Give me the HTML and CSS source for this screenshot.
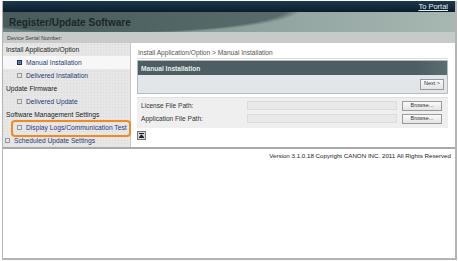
FILE: index.html
```html
<!DOCTYPE html>
<html>
<head>
<meta charset="utf-8">
<link rel="stylesheet" href="styles.css">
</head>
<body>
<div class="frame">
  <div class="topbar"><a class="portal" href="#">To Portal</a></div>
  <div class="header"><h1>Register/Update Software</h1></div>
  <div class="serial">Device Serial Number:</div>
  <div class="content">
    <nav class="sidebar">
      <div class="sec">Install Application/Option</div>
      <div class="item selected"><span class="bullet on"></span>Manual Installation</div>
      <div class="item"><span class="bullet"></span>Delivered Installation</div>
      <div class="sec">Update Firmware</div>
      <div class="item"><span class="bullet"></span>Delivered Update</div>
      <div class="sec">Software Management Settings</div>
      <div class="item hl"><span class="bullet"></span>Display Logs/Communication Test<span class="ring"></span></div>
      <div class="item top"><span class="bullet"></span>Scheduled Update Settings</div>
    </nav>
    <main class="main">
      <div class="crumb">Install Application/Option &gt; Manual Installation</div>
      <section class="panel">
        <div class="panel-head">Manual Installation</div>
        <div class="panel-body"><button class="btn">Next &gt;</button></div>
      </section>
      <section class="form">
        <div class="row"><span class="label">License File Path:</span><span class="field"></span><button class="btn browse">Browse...</button></div>
        <div class="row"><span class="label">Application File Path:</span><span class="field"></span><button class="btn browse">Browse...</button></div>
      </section>
      <div class="totop"><svg width="9" height="9" viewBox="0 0 9 9"><rect x="0.5" y="0.5" width="8" height="8" fill="#d8d8d8" stroke="#777"/><rect x="2" y="2" width="5" height="1" fill="#222"/><path d="M4.5 3.2 L7 6 H2 Z" fill="#222"/><rect x="2" y="6" width="5" height="1" fill="#222"/></svg></div>
    </main>
  </div>
  <footer class="footer">Version 3.1.0.18 Copyright CANON INC. 2011 All Rights Reserved</footer>
</div>
</body>
</html>
```
FILE: styles.css
```css
* { box-sizing: border-box; }
html, body { margin: 0; padding: 0; background: #fff; }
body {
  padding: 1px 1px 1px 2px;
  font-family: "Liberation Sans", Arial, sans-serif;
  width: 458px;
  height: 261px;
}
.frame {
  width: 455px;
  height: 259px;
  border-left: 1px solid #b4b4b4;
  border-right: 2px solid #b4b4b4;
  border-bottom: 2px solid #b4b4b4;
  display: flex;
  flex-direction: column;
  background: #fff;
}
.topbar {
  height: 11px;
  background: linear-gradient(#1c3a4e, #0b1d2b);
  display: flex;
  justify-content: flex-end;
  align-items: center;
  padding-right: 7px;
}
.portal {
  color: #e8eef2;
  font-size: 7.5px;
  text-decoration: underline;
  line-height: 1;
}
.header {
  height: 20px;
  background:
    radial-gradient(ellipse 190px 26px at 110px -4px, rgba(40,60,62,0.55) 0%, rgba(40,60,62,0.55) 92%, rgba(40,60,62,0) 100%),
    linear-gradient(to right, #6d8281, #8fa29e 55%, #a7b7b2);
  display: flex;
  align-items: center;
  padding-left: 6px;
}
.header h1 {
  margin: 0;
  font-size: 10px;
  font-weight: bold;
  color: #1d2528;
}
.serial {
  height: 11px;
  background: #c6cac9;
  font-size: 5.5px;
  color: #3a3a3a;
  display: flex;
  align-items: center;
  padding-left: 4px;
}
.content {
  display: flex;
  height: 106px;
  border-bottom: 2px solid #a9a9a9;
}
.sidebar {
  width: 128px;
  background-color: #e6e6e6;
  background-image: radial-gradient(#dadada 0.6px, transparent 0.7px);
  background-size: 3px 3px;
  border-right: 1px solid #c8c8c8;
  display: flex;
  flex-direction: column;
}
.sec, .item {
  height: 13.2px;
  display: flex;
  align-items: center;
  font-size: 6.7px;
  white-space: nowrap;
  position: relative;
}
.sec { color: #222; padding-left: 3px; }
.item { color: #2b3a74; padding-left: 14px; }
.item.top { padding-left: 2px; }
.item.selected { background: #f7f7f7; }
.bullet {
  width: 5px;
  height: 5px;
  border: 1px solid #999;
  background: #e4e4e4;
  margin-right: 4px;
  flex: none;
}
.bullet.on {
  border: 1px solid #1c2f5c;
  background: #2e4c8c;
  box-shadow: inset 0 0 0 0.5px #8fa4d0;
}
.ring {
  position: absolute;
  left: 8px;
  top: -1px;
  width: 120px;
  height: 17px;
  border: 2px solid #f08a24;
  border-radius: 4px;
}
.main {
  flex: 1;
  padding: 6px 7px 0 6px;
  display: flex;
  flex-direction: column;
}
.crumb {
  font-size: 6.6px;
  color: #555;
  padding: 0 0 3px 1px;
  border-bottom: 1px solid #dedede;
  height: 10px;
}
.panel {
  margin-top: 1px;
  border: 1px solid #b8bcbe;
}
.panel-head {
  height: 14px;
  background: linear-gradient(to right, #4c5e62 90%, #5b6d70);
  color: #e9eded;
  font-size: 6.6px;
  font-weight: bold;
  display: flex;
  align-items: center;
  padding-left: 3px;
}
.panel-body {
  height: 18px;
  background: #e3e6e8;
  display: flex;
  justify-content: flex-end;
  align-items: center;
  padding-right: 3px;
}
.btn {
  font-family: "Liberation Sans", Arial, sans-serif;
  font-size: 5.5px;
  color: #333;
  background: linear-gradient(#fafafa, #e4e4e4);
  border: 1px solid #9a9a9a;
  height: 11px;
  padding: 0 3px;
  line-height: 1;
}
.form {
  margin-top: 3px;
  background: #efefef;
  border-top: 1px solid #e0e0e0;
  padding: 1px 4px 3px 4px;
}
.row {
  height: 13px;
  display: flex;
  align-items: center;
}
.label {
  font-size: 6.6px;
  color: #333;
  width: 106px;
}
.field {
  width: 150px;
  height: 9px;
  background: #e9e9e9;
  border: 1px solid #dcdcdc;
  margin-right: 5px;
}
.browse { width: 40px; height: 10px; }
.totop {
  margin-top: 3px;
  height: 9px;
  line-height: 0;
}
.footer {
  font-size: 6.2px;
  color: #222;
  text-align: right;
  padding: 3px 4px 0 0;
}
```
